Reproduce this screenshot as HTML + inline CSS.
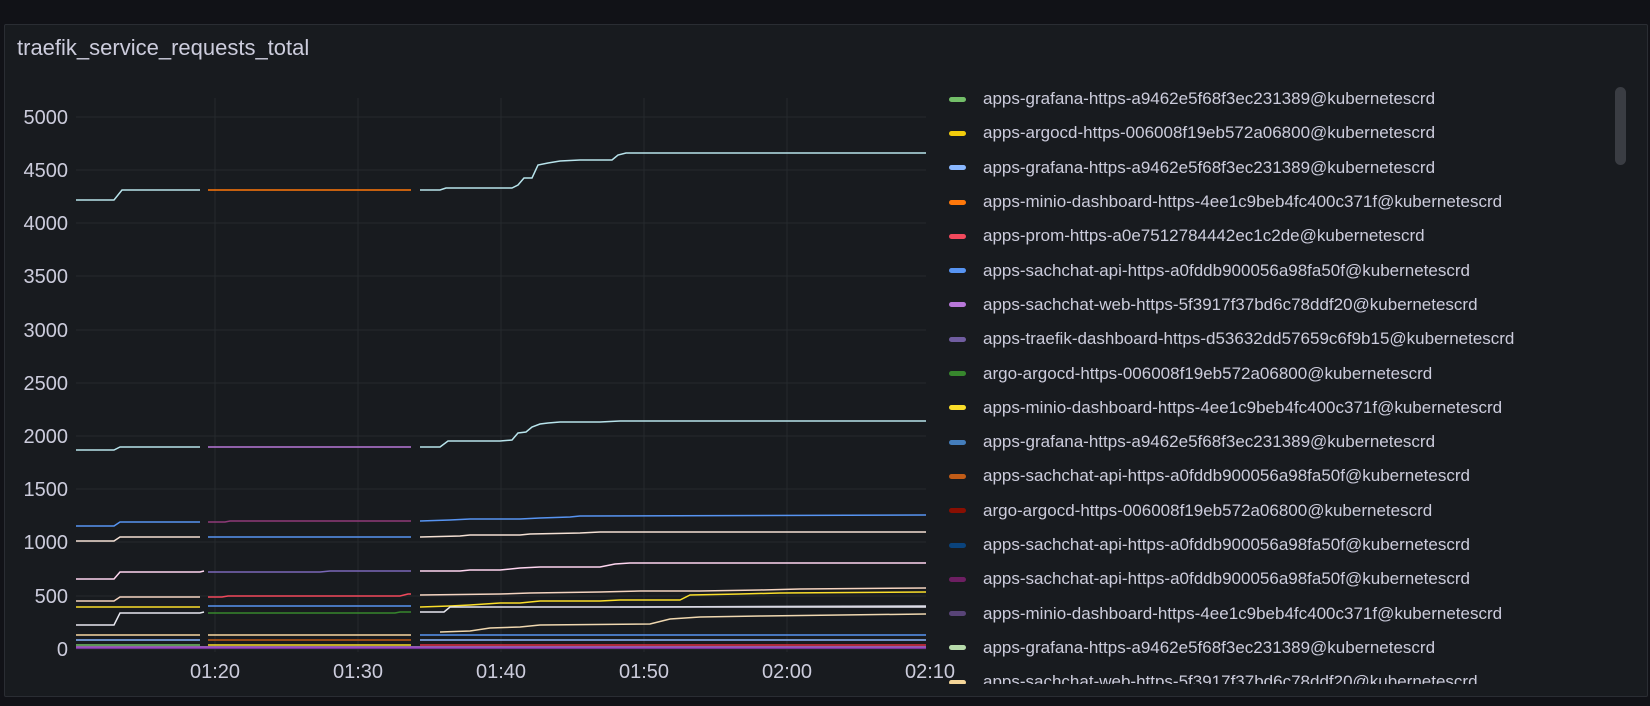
<!DOCTYPE html><html><head><style>
body{margin:0;background:#111217;width:1650px;height:706px;overflow:hidden;font-family:"Liberation Sans",sans-serif}
.panel{position:absolute;left:4px;top:24px;width:1642px;height:671px;background:#181b1f;border:1px solid #2a2d33;border-radius:2px}
.title{position:absolute;left:12px;top:10px;color:#ccccdc;font-size:22px}
.legend{position:absolute;left:942px;top:82px;width:680px;height:602px;overflow:hidden}
.li{height:34.3px;display:flex;align-items:center;color:#ccccdc;font-size:17px;white-space:nowrap}
.sw{width:17px;height:5px;border-radius:3px;margin:0 17px 0 7px;flex:none}
.sb{position:absolute;left:1615px;top:87px;width:11px;height:78px;border-radius:6px;background:#3a3d43}
</style></head><body>
<div class="panel">
<div class="title">traefik_service_requests_total</div>
</div>
<svg width="1650" height="706" style="position:absolute;left:0;top:0" font-family="Liberation Sans" font-size="20" fill="#ccccdc">
<g stroke="#26292e" stroke-width="1">
<line x1="76" x2="926" y1="117" y2="117"/><line x1="76" x2="926" y1="170" y2="170"/><line x1="76" x2="926" y1="223" y2="223"/><line x1="76" x2="926" y1="276" y2="276"/><line x1="76" x2="926" y1="330" y2="330"/><line x1="76" x2="926" y1="383" y2="383"/><line x1="76" x2="926" y1="436" y2="436"/><line x1="76" x2="926" y1="489" y2="489"/><line x1="76" x2="926" y1="542" y2="542"/><line x1="76" x2="926" y1="596" y2="596"/><line x1="76" x2="926" y1="649" y2="649"/>
<line x1="215" x2="215" y1="98" y2="652"/><line x1="358" x2="358" y1="98" y2="652"/><line x1="501" x2="501" y1="98" y2="652"/><line x1="644" x2="644" y1="98" y2="652"/><line x1="787" x2="787" y1="98" y2="652"/>
</g>
<g text-anchor="end">
<text x="68" y="124">5000</text><text x="68" y="177">4500</text><text x="68" y="230">4000</text><text x="68" y="283">3500</text><text x="68" y="337">3000</text><text x="68" y="390">2500</text><text x="68" y="443">2000</text><text x="68" y="496">1500</text><text x="68" y="549">1000</text><text x="68" y="603">500</text><text x="68" y="656">0</text>
</g>
<g text-anchor="middle"><text x="215" y="678">01:20</text><text x="358" y="678">01:30</text><text x="501" y="678">01:40</text><text x="644" y="678">01:50</text><text x="787" y="678">02:00</text><text x="930" y="678">02:10</text></g>
<g fill="none" stroke-width="1.5">
<polyline stroke="#b8e4ec" points="76,200 114,200 122,190 200,190"/>
<line stroke="#ff780a" x1="208" x2="411" y1="190" y2="190"/>
<polyline stroke="#b8e4ec" points="420,190 440,190 446,188 512,188 518,185 524,178 532,178 538,165 548,163 560,161 580,160 612,160 618,155 626,153 926,153"/>
<polyline stroke="#b8e4ec" points="76,450 114,450 120,447 200,447"/>
<line stroke="#b877d9" x1="208" x2="411" y1="447" y2="447"/>
<polyline stroke="#b8e4ec" points="420,447 440,447 448,441 500,441 512,440 518,433 526,432 532,427 540,424 548,423 560,422 600,422 620,421 926,421"/>
<polyline stroke="#5794f2" points="76,526 114,526 120,522 200,522"/>
<polyline stroke="#8f3b78" points="208,522 225,522 230,521 411,521"/>
<polyline stroke="#5794f2" points="420,521 450,520 470,519 520,519 540,518 570,517 580,516 926,515"/>
<polyline stroke="#f4e0d4" points="76,541 114,541 120,537 200,537"/>
<line stroke="#5794f2" x1="208" x2="411" y1="537" y2="537"/>
<polyline stroke="#f4e0d4" points="420,537 460,536 470,535 520,535 530,534 580,533 600,532 926,532"/>
<polyline stroke="#ffd6f0" points="76,579 114,579 120,572 200,572 204,571"/>
<polyline stroke="#7a68b8" points="208,572 320,572 330,571 411,571"/>
<polyline stroke="#ffd6f0" points="420,571 460,571 470,570 500,570 520,568 540,567 600,567 615,564 630,563 926,563"/>
<polyline stroke="#f4d4c0" points="76,601 114,601 120,597 200,597"/>
<polyline stroke="#f2495c" points="208,597 222,597 228,596 400,596 408,594 411,594"/>
<polyline stroke="#f4d4c0" points="420,595 500,594 530,593 600,592 640,591 700,591 760,590 800,589 926,588"/>
<polyline stroke="#fade2a" points="76,607 200,607"/>
<line stroke="#5794f2" x1="208" x2="411" y1="606" y2="606"/>
<polyline stroke="#fade2a" points="420,607 450,606 470,605 500,603 520,603 540,601 600,601 620,600 680,600 690,595 740,594 780,593 926,592"/>
<polyline stroke="#e8e8f0" points="76,625 114,625 120,613 200,613 204,612"/>
<polyline stroke="#37872d" points="208,613 395,613 400,612 411,612"/>
<polyline stroke="#e8e8f0" points="420,612 444,612 450,607 926,607"/>
<polyline stroke="#d8d8e4" points="620,607 926,606"/>
<polyline stroke="#f0d8b0" points="440,632 470,631 490,628 520,627 540,625 650,624 670,619 700,617 760,616 926,614"/>
<line stroke="#f9d8a0" x1="76" x2="200" y1="635" y2="635"/>
<line stroke="#f9d8a0" x1="208" x2="411" y1="635" y2="635"/>
<line stroke="#5794f2" x1="420" x2="926" y1="635" y2="635"/>
<line stroke="#8ab8ff" x1="76" x2="200" y1="640" y2="640"/>
<line stroke="#c15c17" x1="208" x2="411" y1="640" y2="640"/>
<line stroke="#8ab8ff" x1="420" x2="926" y1="640" y2="640"/>
<line stroke="#73bf69" x1="76" x2="200" y1="645" y2="645"/>
<line stroke="#fade2a" x1="208" x2="411" y1="645" y2="645"/>
<line stroke="#e02f44" x1="420" x2="926" y1="645" y2="645"/>
<line stroke="#b877d9" x1="76" x2="926" y1="647" y2="647"/>
<line stroke="#8f3bb8" x1="76" x2="926" y1="648" y2="648"/>
</g>
</svg>
<div class="legend">
<div class="li"><span class="sw" style="background:#73bf69"></span>apps-grafana-https-a9462e5f68f3ec231389@kubernetescrd</div>
<div class="li"><span class="sw" style="background:#f2cc0c"></span>apps-argocd-https-006008f19eb572a06800@kubernetescrd</div>
<div class="li"><span class="sw" style="background:#8ab8ff"></span>apps-grafana-https-a9462e5f68f3ec231389@kubernetescrd</div>
<div class="li"><span class="sw" style="background:#ff780a"></span>apps-minio-dashboard-https-4ee1c9beb4fc400c371f@kubernetescrd</div>
<div class="li"><span class="sw" style="background:#f2495c"></span>apps-prom-https-a0e7512784442ec1c2de@kubernetescrd</div>
<div class="li"><span class="sw" style="background:#5794f2"></span>apps-sachchat-api-https-a0fddb900056a98fa50f@kubernetescrd</div>
<div class="li"><span class="sw" style="background:#b877d9"></span>apps-sachchat-web-https-5f3917f37bd6c78ddf20@kubernetescrd</div>
<div class="li"><span class="sw" style="background:#705da0"></span>apps-traefik-dashboard-https-d53632dd57659c6f9b15@kubernetescrd</div>
<div class="li"><span class="sw" style="background:#37872d"></span>argo-argocd-https-006008f19eb572a06800@kubernetescrd</div>
<div class="li"><span class="sw" style="background:#fade2a"></span>apps-minio-dashboard-https-4ee1c9beb4fc400c371f@kubernetescrd</div>
<div class="li"><span class="sw" style="background:#447ebc"></span>apps-grafana-https-a9462e5f68f3ec231389@kubernetescrd</div>
<div class="li"><span class="sw" style="background:#c15c17"></span>apps-sachchat-api-https-a0fddb900056a98fa50f@kubernetescrd</div>
<div class="li"><span class="sw" style="background:#890f02"></span>argo-argocd-https-006008f19eb572a06800@kubernetescrd</div>
<div class="li"><span class="sw" style="background:#0a437c"></span>apps-sachchat-api-https-a0fddb900056a98fa50f@kubernetescrd</div>
<div class="li"><span class="sw" style="background:#6d1f62"></span>apps-sachchat-api-https-a0fddb900056a98fa50f@kubernetescrd</div>
<div class="li"><span class="sw" style="background:#584477"></span>apps-minio-dashboard-https-4ee1c9beb4fc400c371f@kubernetescrd</div>
<div class="li"><span class="sw" style="background:#b7dbab"></span>apps-grafana-https-a9462e5f68f3ec231389@kubernetescrd</div>
<div class="li"><span class="sw" style="background:#f4d598"></span>apps-sachchat-web-https-5f3917f37bd6c78ddf20@kubernetescrd</div>
</div>
<div class="sb"></div>
</body></html>
